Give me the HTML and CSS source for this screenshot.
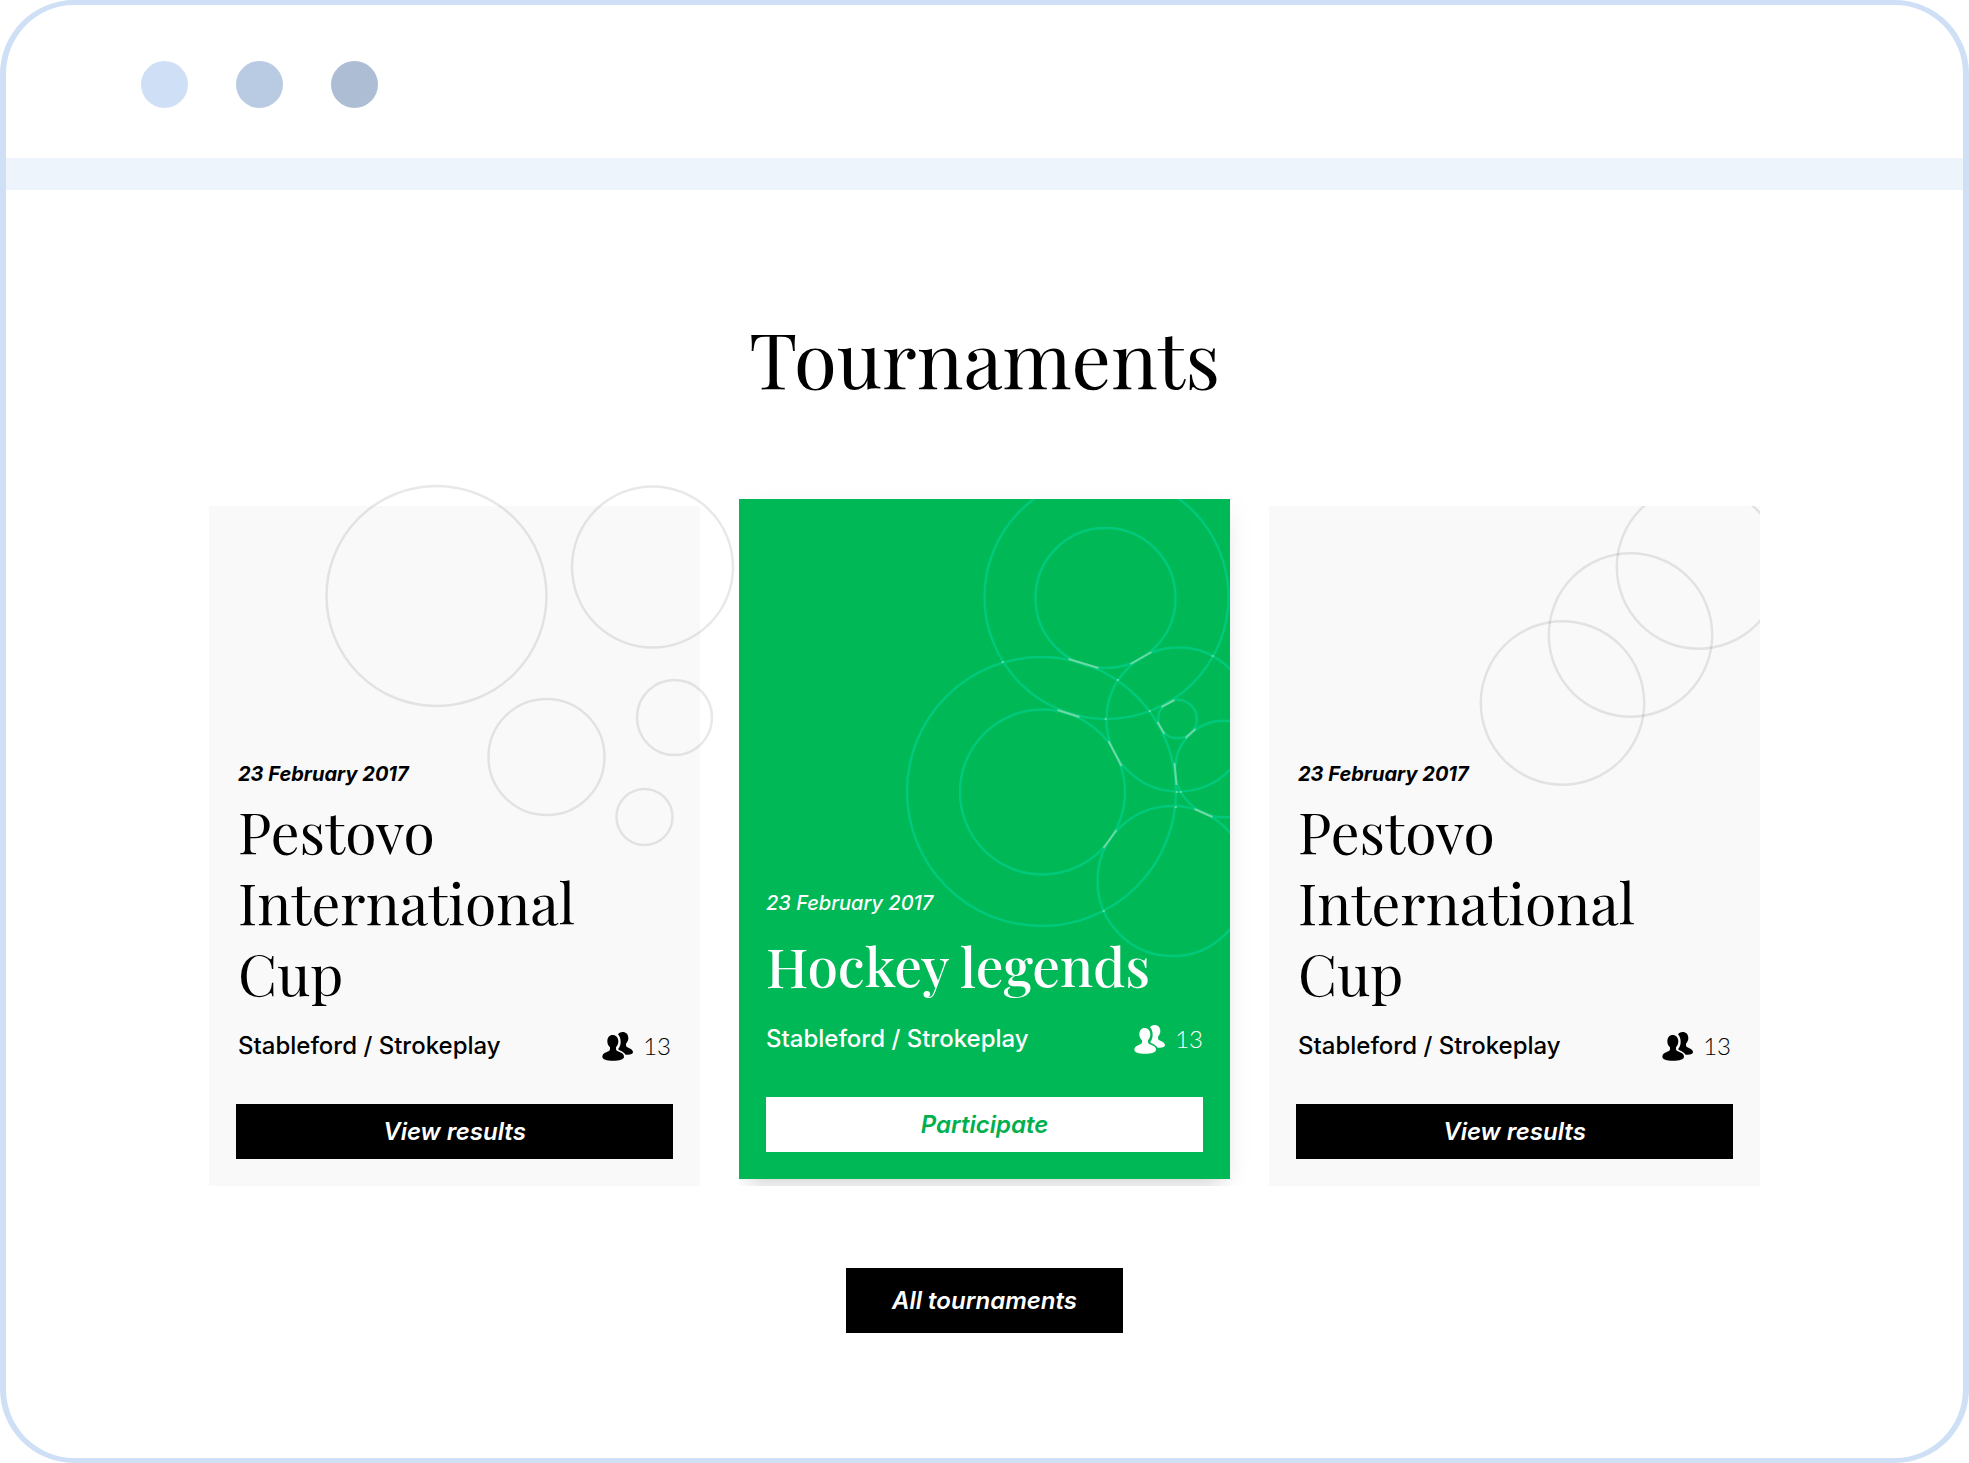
FILE: index.html
```
<!DOCTYPE html>
<html lang="en">
<head>
<meta charset="utf-8">
<meta name="viewport" content="width=device-width, initial-scale=1">
<title>Tournaments</title>
<link rel="stylesheet" href="styles.css">
</head>
<body>
<svg class="sprite" aria-hidden="true">
  <symbol id="people" viewBox="0 0 93 88">
    <path d="M32 11c10 0 17 8 17 19 0 8-3 13-7 18v6c0 5 6 6 12 9 8 3 12 7 12 13 0 8-14 12-33 12S1 84 1 76c0-6 4-10 12-13 6-3 11-4 11-9v-6c-5-5-8-10-8-18 0-11 6-19 16-19z"/>
    <path d="M48 9c4-5 8-7 14-7 10 0 17 7 17 18 0 7-3 12-7 17v5c0 5 4 6 10 9 7 3 11 7 11 12 0 6-9 8-22 7-4-6-9-9-15-12-5-2-7-3-7-6 5-6 7-13 7-21 0-9-3-16-8-22z"/>
  </symbol>
</svg>
<div class="window">
  <header class="window-bar">
    <span class="dot dot-light"></span>
    <span class="dot dot-mid"></span>
    <span class="dot dot-dark"></span>
  </header>
  <main class="page">
    <h1 class="heading">Tournaments</h1>
    <div class="cards">
      <article class="card">
        <svg class="art" viewBox="0 0 490 680" aria-hidden="true">
          <circle cx="227" cy="90" r="110"/>
          <circle cx="443" cy="61" r="80.500"/>
          <circle cx="337" cy="251" r="58"/>
          <circle cx="465" cy="211.500" r="37.500"/>
          <circle cx="435" cy="311" r="28"/>
        </svg>
        <div class="card-body">
          <time class="date" datetime="2017-02-23">23 February 2017</time>
          <h2 class="title">Pestovo International Cup</h2>
          <div class="meta">
            <span>Stableford / Strokeplay</span>
            <span class="players"><svg class="icon" role="img" aria-label="Players"><use href="#people"/></svg>13</span>
          </div>
        </div>
        <button class="button" type="button">View results</button>
      </article>
      <article class="card card-featured">
        <svg class="art art-clipped" viewBox="0 0 490 680" aria-hidden="true">
          <circle cx="367" cy="98" r="122"/>
          <circle cx="366" cy="99" r="70"/>
          <circle cx="302" cy="292.500" r="134.500"/>
          <circle cx="303" cy="293" r="82.500"/>
          <circle cx="439" cy="220.500" r="72"/>
          <circle cx="438" cy="220" r="19.300"/>
          <circle cx="484" cy="270" r="48.300"/>
          <circle cx="433" cy="382" r="75"/>
          <path class="glint" d="M329 160l30 9M391 165l21-12M318 211l22 7M369 242l13 25M422 208l13-7M418 223l7 12M446 239l10-9M435 264l2 22M455 310l18 8M364 349l13-18"/>
          <path class="glint" stroke-linecap="round" d="M263 163h.5M473 157h.5M378 181h.5M410 212h.5M366 220h.5M437 293h.5M441 293h.5M436 308h.5M364 412h.5"/>
        </svg>
        <div class="card-body">
          <time class="date" datetime="2017-02-23">23 February 2017</time>
          <h2 class="title">Hockey legends</h2>
          <div class="meta">
            <span>Stableford / Strokeplay</span>
            <span class="players"><svg class="icon" role="img" aria-label="Players"><use href="#people"/></svg>13</span>
          </div>
        </div>
        <button class="button" type="button">Participate</button>
      </article>
      <article class="card">
        <svg class="art art-clipped" viewBox="0 0 490 680" aria-hidden="true">
          <circle cx="293" cy="197" r="81.700"/>
          <circle cx="361" cy="129" r="81.700"/>
          <circle cx="429" cy="61" r="81.700"/>
        </svg>
        <div class="card-body">
          <time class="date" datetime="2017-02-23">23 February 2017</time>
          <h2 class="title">Pestovo International Cup</h2>
          <div class="meta">
            <span>Stableford / Strokeplay</span>
            <span class="players"><svg class="icon" role="img" aria-label="Players"><use href="#people"/></svg>13</span>
          </div>
        </div>
        <button class="button" type="button">View results</button>
      </article>
    </div>
    <button class="button button-all" type="button">All tournaments</button>
  </main>
</div>
</body>
</html>
```
FILE: styles.css
```
*, *::before, *::after { box-sizing: border-box; }

body {
  margin: 0;
  background: #fff;
  color: #000;
  font-family: Inter, "Liberation Sans", sans-serif;
}

.sprite { position: absolute; width: 0; height: 0; }

.window {
  min-height: 100vh;
  border: 6px solid #cfe0f6;
  border-top-width: 5px;
  border-bottom-width: 5px;
  border-radius: 74px;
}

.window-bar {
  display: flex;
  align-items: center;
  gap: 48px;
  height: 185px;
  padding: 6px 135px 0;
  border-bottom: 32px solid #edf4fc;
}

.dot { width: 47px; height: 47px; border-radius: 50%; }
.dot-light { background: #cfe0f6; }
.dot-mid { background: #b9cbe2; }
.dot-dark { background: #adbdd4; }

.page {
  display: flex;
  flex-direction: column;
  align-items: center;
  padding: 123px 203px 80px;
}

.heading {
  margin: 0;
  font: 400 78px/88px "Playfair Display", "Liberation Serif", serif;
}

.cards {
  display: grid;
  grid-template-columns: repeat(3, minmax(0, 1fr));
  gap: 39px;
  width: 100%;
  margin: 105px 0 82px;
}

.card {
  position: relative;
  display: flex;
  flex-direction: column;
  justify-content: flex-end;
  min-height: 680px;
  padding: 27px;
  background: #f9f9f9;
}

.card-featured {
  margin: -7px 0 7px;
  background: #00b855;
  color: #fff;
  box-shadow: 0 14px 20px -10px rgba(0, 0, 0, .16), 4px 4px 24px rgba(0, 0, 0, .04);
  clip-path: inset(-16px -32px -7px 0);
}

/* Decorative rings behind the card text */
.art {
  position: absolute;
  top: 0;
  left: 0;
  width: 100%;
  height: 680px;
  overflow: visible;
  fill: none;
  stroke: #000;
  stroke-opacity: .09;
  stroke-width: 2.5px;
}
.art-clipped { overflow: hidden; }
.card-featured .art { stroke: #00c97b; stroke-opacity: 1; }
.art .glint { stroke: #6fd8a4; stroke-width: 2px; }

.card-body {
  position: relative;
  display: flex;
  flex-direction: column;
  padding: 0 2px;
}
.card-featured .card-body { padding: 0; }

.date { font-size: 20px; line-height: 24px; font-style: italic; font-weight: 700; }
.card-featured .date { font-weight: 500; }

.title {
  margin: 9px 0 22px;
  font: 400 57px/71px "Playfair Display", "Liberation Serif", serif;
}
.card-featured .title { margin-top: 15px; font-size: 55px; font-weight: 500; }

.meta {
  display: flex;
  justify-content: space-between;
  font-size: 24px;
  line-height: 32px;
  font-weight: 500;
}

.players {
  display: flex;
  align-items: center;
  gap: 10px;
  font-family: Lato, sans-serif;
  font-weight: 300;
}
.icon { width: 31px; height: 30px; fill: currentColor; }

.button {
  position: relative;
  height: 55px;
  margin-top: 42px;
  padding: 0;
  border: 0;
  background: #000;
  color: #fff;
  font: italic 600 24px/32px Inter, "Liberation Sans", sans-serif;
  cursor: pointer;
}
.card-featured .button { background: #fff; color: #00b04f; }

.button-all { height: 65px; margin: 0; padding: 0 46px; }
```
